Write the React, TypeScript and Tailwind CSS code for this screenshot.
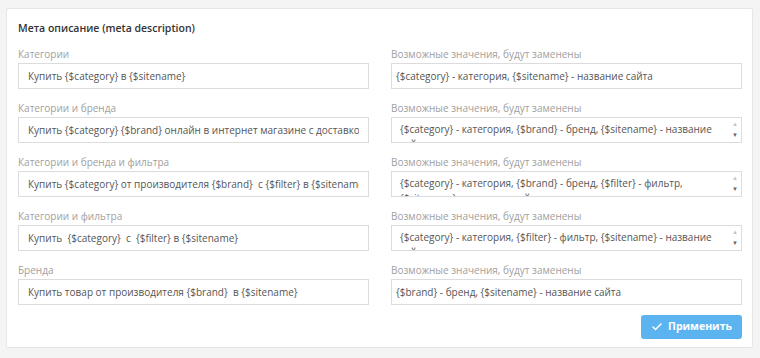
import { Check } from 'lucide-react';

const rows = [
  {
    label: 'Категории',
    value: 'Купить {$category} в {$sitename}',
    hint: '{$category} - категория, {$sitename} - название сайта',
    multi: false,
  },
  {
    label: 'Категории и бренда',
    value: 'Купить {$category} {$brand} онлайн в интернет магазине с доставкой по всей стране',
    hint: '{$category} - категория, {$brand} - бренд, {$sitename} - название сайта',
    multi: true,
  },
  {
    label: 'Категории и бренда и фильтра',
    value: 'Купить {$category} от производителя {$brand}  с {$filter} в {$sitename}',
    hint: '{$category} - категория, {$brand} - бренд, {$filter} - фильтр, {$sitename} - название сайта',
    multi: true,
  },
  {
    label: 'Категории и фильтра',
    value: 'Купить  {$category}  с  {$filter} в {$sitename}',
    hint: '{$category} - категория, {$filter} - фильтр, {$sitename} - название сайта',
    multi: true,
  },
  {
    label: 'Бренда',
    value: 'Купить товар от производителя {$brand}  в {$sitename}',
    hint: '{$brand} - бренд, {$sitename} - название сайта',
    multi: false,
  },
];

export default function App() {
  return (
    <div
      className="min-h-screen w-[760px] h-[358px] bg-[#f4f4f4] pt-[8px] pl-[6px]"
      style={{ fontFamily: '"Open Sans", "Liberation Sans", sans-serif' }}
    >
      <div className="w-[747px] bg-white border border-[#e6e6e6] rounded-[2px] pl-[11px] pr-[10px] pt-[11px] pb-[8px]">
        <h3 className="text-[10.5px] leading-[16px] font-semibold text-[#333] mb-[11px]">
          Мета описание (meta description)
        </h3>

        <div className="grid grid-cols-2 gap-x-[22px] gap-y-[12px]">
          {rows.map((row) => (
            <div key={row.label} className="contents">
              <div>
                <label className="block text-[10px] leading-[14px] text-[#a0a0a0] mb-[2px]">{row.label}</label>
                <input
                  type="text"
                  defaultValue={row.value}
                  className="block w-full h-[26px] border border-[#dcdcdc] px-[9px] text-[10px] text-[#555] outline-none"
                />
              </div>
              <div>
                <label className="block text-[10px] leading-[14px] text-[#a0a0a0] mb-[2px]">
                  Возможные значения, будут заменены
                </label>
                {row.multi ? (
                  <div className="flex w-full h-[26px] border border-[#dcdcdc] bg-white">
                    <div className="flex-1 overflow-hidden pl-[8px] pr-[6px] pt-[4px] text-[10px] leading-[15px] text-[#555]">
                      {row.hint}
                    </div>
                    <div className="w-[12px] flex flex-col items-center justify-between py-[3px] text-[6px] leading-[7px]">
                      <span className="text-[#c4c4c4]">▲</span>
                      <span className="text-[#666]">▼</span>
                    </div>
                  </div>
                ) : (
                  <input
                    type="text"
                    defaultValue={row.hint}
                    className="block w-full h-[26px] border border-[#dcdcdc] px-[4px] text-[10px] text-[#555] outline-none"
                  />
                )}
              </div>
            </div>
          ))}
        </div>

        <div className="flex justify-end mt-[10px]">
          <button className="flex items-center justify-center gap-[5px] w-[101px] h-[24px] rounded-[3px] bg-[#5bb4f0] text-white text-[10.5px] font-bold">
            <Check className="w-[12px] h-[12px]" strokeWidth={3} />
            Применить
          </button>
        </div>
      </div>
    </div>
  );
}
